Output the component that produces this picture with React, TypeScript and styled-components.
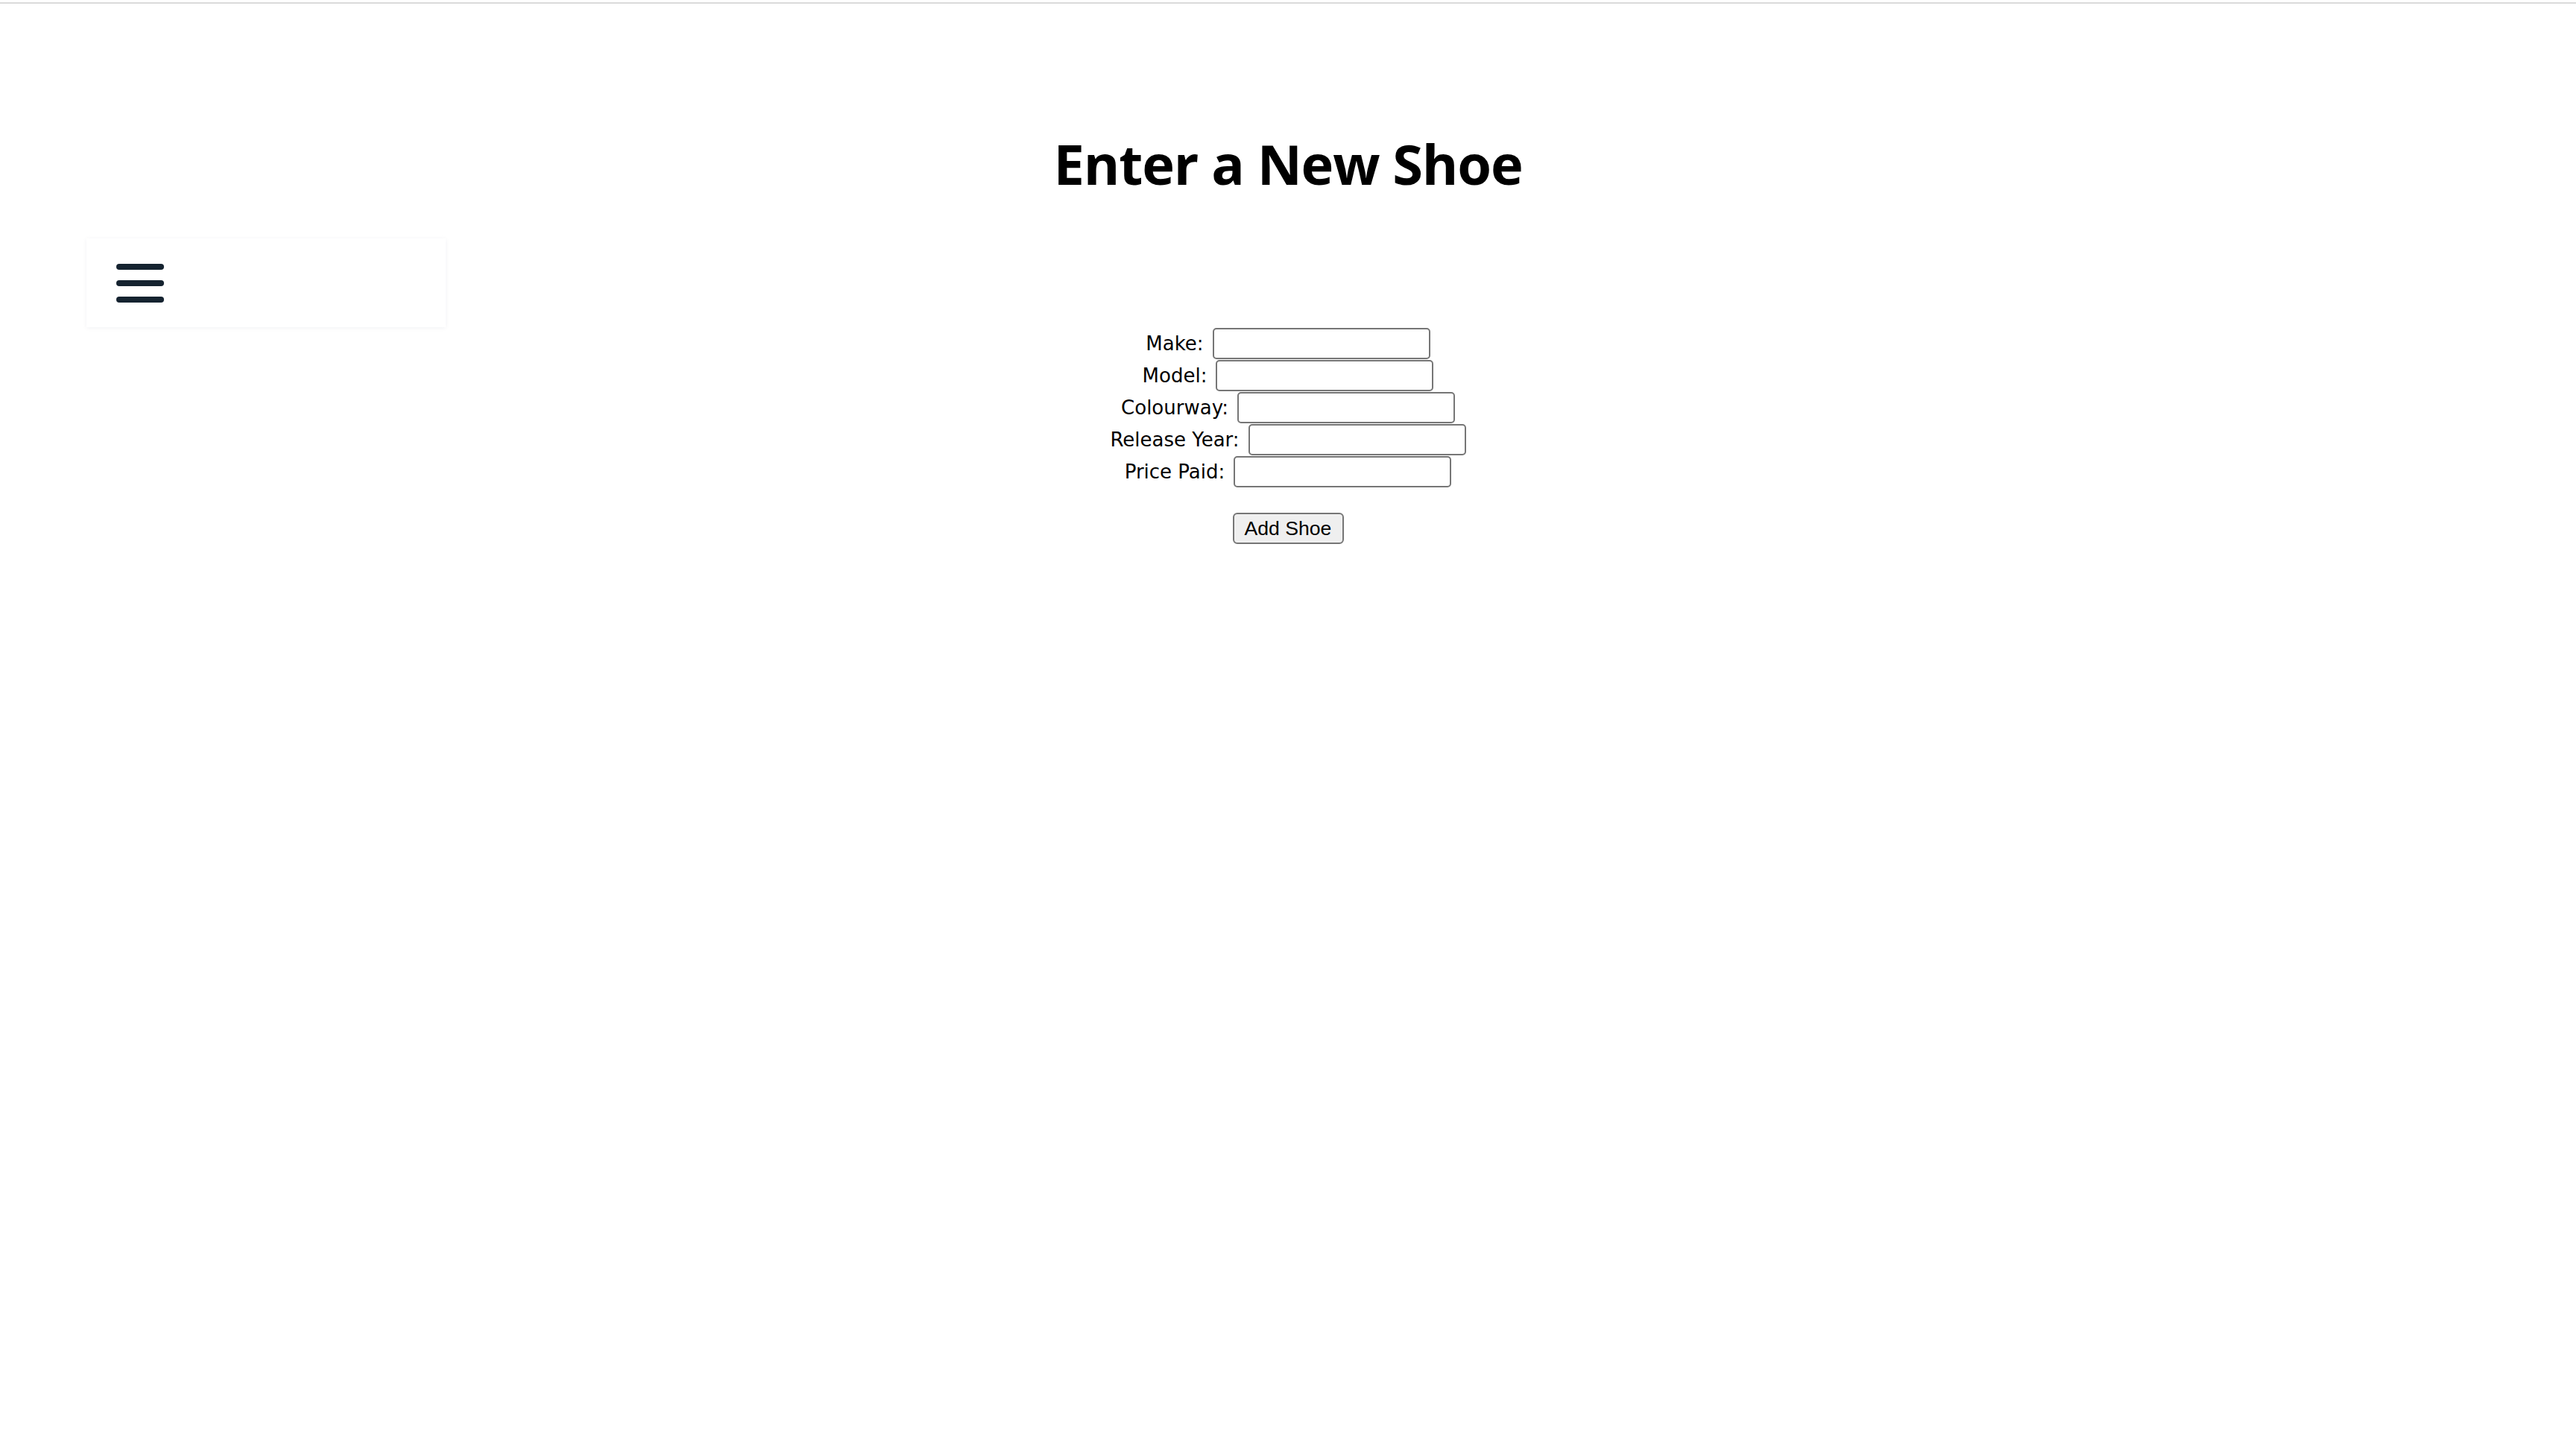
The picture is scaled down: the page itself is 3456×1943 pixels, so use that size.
import React from "react";
import styled, { createGlobalStyle } from "styled-components";

const GlobalStyle = createGlobalStyle`
  html, body {
    margin: 0;
    padding: 0;
    background: #ffffff;
  }
  body {
    font-family: "DejaVu Sans", "Liberation Sans", sans-serif;
    color: #000000;
  }
`;

const Page = styled.div`
  display: flex;
  flex-direction: column;
  min-height: 1943px;
  background: #ffffff;
`;

const TopRule = styled.div`
  margin-top: 3px;
  height: 2px;
  background: #dadada;
`;

const Title = styled.h1`
  margin: 0;
  padding-top: 178px;
  text-align: center;
  font-family: "Open Sans", "DejaVu Sans", sans-serif;
  font-weight: 700;
  font-size: 74px;
  line-height: 1;
  letter-spacing: -1.2px;
  color: #000000;
`;

const NavCard = styled.nav`
  margin-top: 63px;
  margin-left: 116px;
  width: 482px;
  height: 119px;
  box-sizing: border-box;
  padding-left: 36px;
  display: flex;
  align-items: center;
  background: #ffffff;
  box-shadow: 0 1px 6px rgba(20, 30, 60, 0.06);
`;

const MenuButton = styled.button`
  display: flex;
  align-items: center;
  justify-content: center;
  padding: 0;
  border: none;
  background: transparent;
  cursor: pointer;
`;

const Form = styled.form`
  display: flex;
  flex-direction: column;
  align-items: center;
`;

const Row = styled.div`
  display: flex;
  align-items: center;
  justify-content: center;
  gap: 12px;
  height: 43px;
`;

const Label = styled.label`
  font-family: "DejaVu Sans", "Liberation Sans", sans-serif;
  font-size: 26px;
  color: #000000;
  white-space: nowrap;
`;

const Input = styled.input`
  box-sizing: border-box;
  width: 292px;
  height: 42px;
  margin: 0;
  border: 2px solid #767676;
  border-radius: 5px;
  background: #ffffff;
  font-size: 26px;
  padding: 2px 4px;
  outline: none;
`;

const SubmitButton = styled.button`
  margin-top: 34px;
  box-sizing: border-box;
  width: 149px;
  height: 42px;
  border: 2px solid #767676;
  border-radius: 6px;
  background: #efefef;
  font-family: "Liberation Sans", Arial, sans-serif;
  font-size: 26.6px;
  color: #000000;
  padding: 0;
  cursor: pointer;
`;

const HamburgerIcon = () => (
  <svg width="72" height="60" viewBox="0 0 72 60" aria-hidden="true">
    <g stroke="#152330" strokeWidth="8" strokeLinecap="round">
      <line x1="8" y1="8" x2="64" y2="8" />
      <line x1="8" y1="30" x2="64" y2="30" />
      <line x1="8" y1="52" x2="64" y2="52" />
    </g>
  </svg>
);

const fields = ["Make", "Model", "Colourway", "Release Year", "Price Paid"];

export default function App() {
  return (
    <>
      <GlobalStyle />
      <Page>
        <TopRule />
        <Title>Enter a New Shoe</Title>
        <NavCard>
          <MenuButton type="button" aria-label="Menu">
            <HamburgerIcon />
          </MenuButton>
        </NavCard>
        <Form onSubmit={(e) => e.preventDefault()}>
          {fields.map((f) => (
            <Row key={f}>
              <Label htmlFor={f}>{f}:</Label>
              <Input id={f} type="text" />
            </Row>
          ))}
          <SubmitButton type="submit">Add Shoe</SubmitButton>
        </Form>
      </Page>
    </>
  );
}
